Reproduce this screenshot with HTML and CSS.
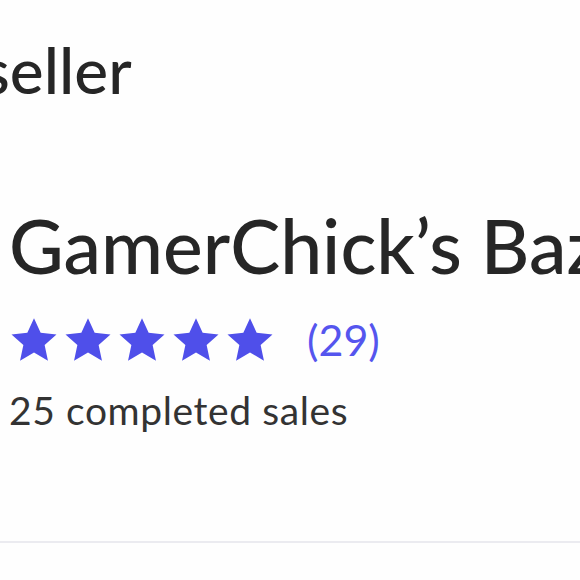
FILE: index.html
```html
<!DOCTYPE html>
<html>
	<head>
		<meta charset="utf-8">
		<title>Seller</title>
		<link rel="stylesheet" href="styles.css">
	</head>
	<body>
		<div class="page">
			<h2 class="section_title">About the seller</h2>
			<div class="seller">
				<h1 class="seller_name">GamerChick’s Bazaar</h1>
				<div class="rating">
					<span class="stars">
						<svg viewBox="0 0 24 24"><path d="M12 1.5l3.2 7 7.6.8-5.7 5.1 1.6 7.5L12 18l-6.7 3.9 1.6-7.5L1.2 9.3l7.6-.8z"/></svg>
						<svg viewBox="0 0 24 24"><path d="M12 1.5l3.2 7 7.6.8-5.7 5.1 1.6 7.5L12 18l-6.7 3.9 1.6-7.5L1.2 9.3l7.6-.8z"/></svg>
						<svg viewBox="0 0 24 24"><path d="M12 1.5l3.2 7 7.6.8-5.7 5.1 1.6 7.5L12 18l-6.7 3.9 1.6-7.5L1.2 9.3l7.6-.8z"/></svg>
						<svg viewBox="0 0 24 24"><path d="M12 1.5l3.2 7 7.6.8-5.7 5.1 1.6 7.5L12 18l-6.7 3.9 1.6-7.5L1.2 9.3l7.6-.8z"/></svg>
						<svg viewBox="0 0 24 24"><path d="M12 1.5l3.2 7 7.6.8-5.7 5.1 1.6 7.5L12 18l-6.7 3.9 1.6-7.5L1.2 9.3l7.6-.8z"/></svg>
					</span>
					<span class="count">(29)</span>
				</div>
				<p class="sales">25 completed sales</p>
			</div>
			<hr class="divider">
		</div>
	</body>
</html>
```

FILE: styles.css
```css
*{
	margin: 0;
	padding: 0;
	box-sizing: border-box;
}
body{
	width: 580px;
	height: 580px;
	overflow: hidden;
	background-color: #fefefe;
	font-family: Lato, "Noto Sans", sans-serif;
	color: #262626;
}
.page{
	padding-top: 30px;
	white-space: nowrap;
}
.section_title{
	margin-left: -318px;
	font-size: 64px;
	font-weight: 500;
	line-height: 80px;
}
.seller{
	padding: 91px 0 0 9px;
}
.seller_name{
	font-size: 75px;
	font-weight: 500;
	line-height: 88px;
}
.rating{
	display: flex;
	align-items: center;
	gap: 32px;
	margin-top: 25px;
}
.stars{
	display: flex;
	gap: 4px;
}
.stars svg{
	width: 50px;
	height: 50px;
	fill: #4f4fea;
}
.count{
	font-size: 43px;
	color: #5555ee;
}
.sales{
	margin-top: 22px;
	font-size: 39px;
	letter-spacing: 0.6px;
	color: #333;
}
.divider{
	margin-top: 108px;
	border: none;
	border-top: 2px solid #ebebf0;
}
```
